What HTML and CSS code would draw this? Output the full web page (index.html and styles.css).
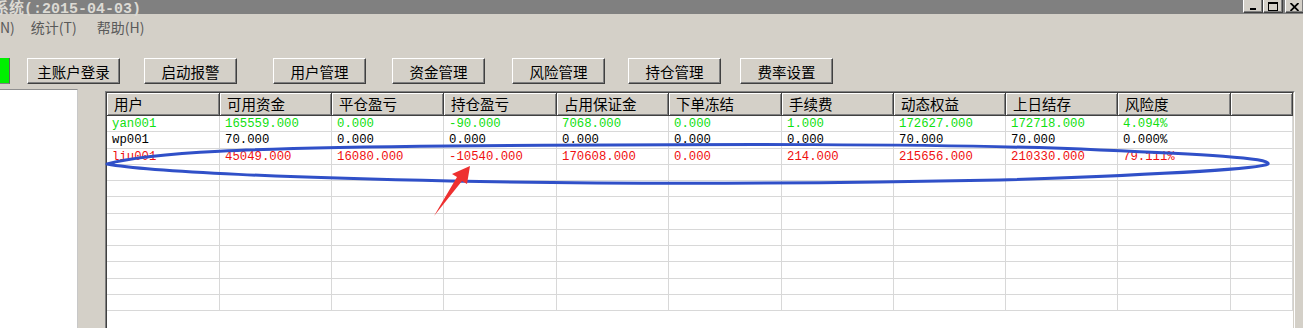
FILE: index.html
```html
<!DOCTYPE html>
<html lang="zh-CN">
<head>
    <meta charset="UTF-8">
    <title>系统</title>
    <link rel="stylesheet" href="styles.css">
</head>
<body>
    <div class="titlebar">
        <span class="title">系统<span class="date">(:2015-04-03)</span></span>
        <div class="caption-buttons">
            <span class="cap-btn"><svg width="9" height="9" viewBox="0 0 9 9"><rect x="1" y="6" width="6" height="2" fill="#000"/></svg></span>
            <span class="cap-btn"><svg width="10" height="9" viewBox="0 0 10 9"><rect x="0.5" y="0.5" width="9" height="8" fill="none" stroke="#000"/><rect x="0" y="0" width="10" height="2" fill="#000"/></svg></span>
            <span class="cap-btn close"><svg width="9" height="8" viewBox="0 0 9 8"><path d="M0.5 0 L8.5 8 M8.5 0 L0.5 8" stroke="#000" stroke-width="1.8"/></svg></span>
        </div>
    </div>

    <div class="menubar">
        <span class="menu-item">N)</span>
        <span class="menu-item">统计(T)</span>
        <span class="menu-item">帮助(H)</span>
    </div>

    <div class="toolbar">
        <div class="indicator"></div>
        <button class="btn">主账户登录</button>
        <button class="btn">启动报警</button>
        <button class="btn">用户管理</button>
        <button class="btn">资金管理</button>
        <button class="btn">风险管理</button>
        <button class="btn">持仓管理</button>
        <button class="btn">费率设置</button>
    </div>

    <div class="main">
        <div class="side-panel"></div>
        <div class="listview">
            <div class="lv-inner">
                <div class="lv-header">
                    <div class="hd">用户</div>
                    <div class="hd">可用资金</div>
                    <div class="hd">平仓盈亏</div>
                    <div class="hd">持仓盈亏</div>
                    <div class="hd">占用保证金</div>
                    <div class="hd">下单冻结</div>
                    <div class="hd">手续费</div>
                    <div class="hd">动态权益</div>
                    <div class="hd">上日结存</div>
                    <div class="hd">风险度</div>
                    <div class="hd"></div>
                </div>
                <div class="lv-row green">
                    <div>yan001</div><div>165559.000</div><div>0.000</div><div>-90.000</div><div>7068.000</div><div>0.000</div><div>1.000</div><div>172627.000</div><div>172718.000</div><div>4.094%</div><div></div>
                </div>
                <div class="lv-row">
                    <div>wp001</div><div>70.000</div><div>0.000</div><div>0.000</div><div>0.000</div><div>0.000</div><div>0.000</div><div>70.000</div><div>70.000</div><div>0.000%</div><div></div>
                </div>
                <div class="lv-row red">
                    <div>liu001</div><div>45049.000</div><div>16080.000</div><div>-10540.000</div><div>170608.000</div><div>0.000</div><div>214.000</div><div>215656.000</div><div>210330.000</div><div>79.111%</div><div></div>
                </div>
                <div class="lv-row"><div></div><div></div><div></div><div></div><div></div><div></div><div></div><div></div><div></div><div></div><div></div></div>
                <div class="lv-row"><div></div><div></div><div></div><div></div><div></div><div></div><div></div><div></div><div></div><div></div><div></div></div>
                <div class="lv-row"><div></div><div></div><div></div><div></div><div></div><div></div><div></div><div></div><div></div><div></div><div></div></div>
                <div class="lv-row"><div></div><div></div><div></div><div></div><div></div><div></div><div></div><div></div><div></div><div></div><div></div></div>
                <div class="lv-row"><div></div><div></div><div></div><div></div><div></div><div></div><div></div><div></div><div></div><div></div><div></div></div>
                <div class="lv-row"><div></div><div></div><div></div><div></div><div></div><div></div><div></div><div></div><div></div><div></div><div></div></div>
                <div class="lv-row"><div></div><div></div><div></div><div></div><div></div><div></div><div></div><div></div><div></div><div></div><div></div></div>
                <div class="lv-row"><div></div><div></div><div></div><div></div><div></div><div></div><div></div><div></div><div></div><div></div><div></div></div>
                <div class="lv-row"><div></div><div></div><div></div><div></div><div></div><div></div><div></div><div></div><div></div><div></div><div></div></div>
            </div>
        </div>
    </div>

    <!-- hand-drawn markup over the screenshot -->
    <svg class="markup" width="1303" height="328" viewBox="0 0 1303 328">
        <path d="M107 164 C150 152 250 148 450 146 C700 144 950 143 1100 150 C1200 154 1272 158 1268 164 C1262 168 1180 174 1000 180 C800 184 600 184 450 181 C300 178 150 172 107 164 Z"
              fill="none" stroke="#3050c8" stroke-width="3" stroke-linejoin="round"/>
        <polygon points="470,166 452,174 457,177 434,216 462,181 467,184" fill="#ee3030"/>
    </svg>
</body>
</html>
```

FILE: styles.css
```css
* {
    box-sizing: border-box;
}

html, body {
    margin: 0;
    padding: 0;
}

body {
    position: relative;
    width: 1303px;
    height: 328px;
    overflow: hidden;
    background: #d4d0c8;
    font-family: "Noto Sans CJK SC", sans-serif;
    color: #000;
}

/* title bar */
.titlebar {
    height: 14px;
    background: #808080;
    display: flex;
    justify-content: space-between;
    align-items: flex-start;
}

.title {
    margin-left: -6px;
    color: #dcdad4;
    font-weight: bold;
    font-size: 15px;
    line-height: 13px;
    white-space: nowrap;
}

.title .date {
    font-family: "Liberation Mono", monospace;
}

.caption-buttons {
    display: flex;
}

.cap-btn {
    width: 20px;
    height: 13px;
    background: #d4d0c8;
    border-left: 1px solid #fff;
    border-right: 1px solid #404040;
    border-bottom: 1px solid #404040;
    box-shadow: inset -1px -1px #808080;
    display: flex;
    align-items: flex-end;
    justify-content: center;
    padding-bottom: 1px;
}

.cap-btn.close {
    width: 18px;
    margin-left: 2px;
    border-right: none;
}

/* menu */
.menubar {
    height: 26px;
    display: flex;
    align-items: center;
    font-size: 14px;
    color: #5a5a5a;
}

.menu-item:nth-child(2) { margin-left: 16px; }
.menu-item:nth-child(3) { margin-left: 20px; }

/* toolbar */
.toolbar {
    height: 49px;
    padding-top: 18px;
    display: flex;
    align-items: flex-start;
}

.indicator {
    width: 10px;
    height: 26px;
    background: #00f000;
    border-right: 1px solid #606060;
    border-bottom: 1px solid #808080;
}

.btn {
    width: 93px;
    height: 26px;
    padding: 0;
    background: #d4d0c8;
    border: 1px solid;
    border-color: #fff #404040 #404040 #fff;
    box-shadow: inset -1px -1px #808080;
    font-family: "Noto Sans CJK SC", sans-serif;
    font-size: 14.5px;
    color: #000;
}

.btn:nth-of-type(1) { margin-left: 17px; }
.btn:nth-of-type(2) { margin-left: 24px; }
.btn:nth-of-type(3) { margin-left: 36px; }
.btn:nth-of-type(4) { margin-left: 26px; }
.btn:nth-of-type(5) { margin-left: 27px; }
.btn:nth-of-type(6) { margin-left: 23px; }
.btn:nth-of-type(7) { margin-left: 19px; }

/* main area */
.main {
    display: flex;
    align-items: flex-start;
    height: 239px;
}

.side-panel {
    width: 78px;
    height: 100%;
    background: #fff;
    border-top: 1px solid #909090;
    border-right: 1px solid #c8c8c8;
}

.listview {
    width: 1190px;
    height: 245px;
    margin-left: 27px;
    margin-top: 2px;
    border: 1px solid;
    border-color: #808080 #fff #fff #808080;
}

.lv-inner {
    height: 100%;
    background: #fff;
    border: 1px solid;
    border-color: #404040 #d4d0c8 #d4d0c8 #404040;
    overflow: hidden;
}

.lv-header,
.lv-row {
    display: grid;
    grid-template-columns: 113px 112px 112px 113px 112px 113px 112px 112px 112px 113px 1fr;
}

.lv-header {
    height: 23px;
}

.hd {
    background: #d4d0c8;
    border-right: 1px solid #404040;
    border-bottom: 1px solid #404040;
    box-shadow: inset 1px 1px #fff, inset -1px -1px #808080;
    padding-left: 7px;
    font-size: 14.5px;
    line-height: 21px;
    white-space: nowrap;
    overflow: hidden;
}

.lv-row {
    height: 16.25px;
    border-bottom: 1px solid #d8d8d8;
    font-family: "Liberation Mono", monospace;
    font-size: 12.3px;
    line-height: 16px;
}

.lv-row > div {
    border-right: 1px solid #d8d8d8;
    padding-left: 5px;
    white-space: nowrap;
}

.lv-row.green {
    color: #10e010;
}

.lv-row.red {
    color: #f01010;
}

.markup {
    position: absolute;
    top: 0;
    left: 0;
    pointer-events: none;
}
```
